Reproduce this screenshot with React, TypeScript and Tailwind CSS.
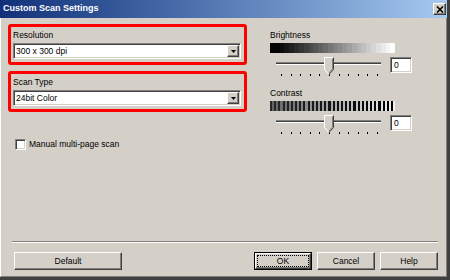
import React from "react";

const raised =
  "border border-t-white border-l-white border-b-[#404040] border-r-[#404040] shadow-[inset_-1px_-1px_0_#808080]";
const sunken =
  "border border-t-[#808080] border-l-[#808080] border-b-white border-r-white shadow-[inset_1px_1px_0_#404040,inset_-1px_-1px_0_#d4d0c8]";

const Combo = ({ value }: { value: string }) => (
  <div className={`flex h-[16px] w-[228px] bg-white p-[1px] ${sunken}`}>
    <div className="flex-1 pl-[1px] text-[8.5px] leading-[12px]">{value}</div>
    <div className={`flex w-[12px] items-center justify-center bg-[#d4d0c8] ${raised}`}>
      <svg width="5" height="3" viewBox="0 0 5 3">
        <path d="M0 0H5L2.5 3Z" fill="#000" />
      </svg>
    </div>
  </div>
);

const Field = ({ label, value }: { label: string; value: string }) => (
  <div className="h-[41px] w-[239px] rounded-[3px] border-[3px] border-[#ff0000] pt-[3px] pl-[2px]">
    <div className="h-[10px] text-[8.5px] leading-[10px]">{label}</div>
    <div className="mt-[3px]">
      <Combo value={value} />
    </div>
  </div>
);

const Thumb = () => (
  <svg width="10" height="18" viewBox="0 0 10 18" className="absolute top-0 left-[48px]">
    <path d="M0.5 0.5H9.5V12.5L5 17.5L0.5 12.5Z" fill="#d4d0c8" />
    <path d="M0.5 12.5V0.5H9.5" stroke="#fff" fill="none" />
    <path d="M0.5 12.5L5 17.5" stroke="#fff" fill="none" />
    <path d="M9.5 0.5V12.5L5 17.5" stroke="#404040" fill="none" />
    <path d="M8.5 1.5V12L5 16" stroke="#808080" fill="none" />
  </svg>
);

const Slider = () => (
  <div className="flex items-start">
    <div className="relative ml-[6px] h-[22px] w-[105px]">
      <div className="mt-[5px] h-[3px] border-t border-b border-t-[#808080] border-b-white bg-[#404040]" />
      <div className="mt-[9px] flex justify-between pl-[5px] pr-[3px]">
        {Array.from({ length: 11 }).map((_, i) => (
          <div key={i} className="h-[2px] w-[1px] bg-black" />
        ))}
      </div>
      <Thumb />
    </div>
    <div className={`ml-[9px] h-[16px] w-[22px] bg-white pl-[3px] text-[8.5px] leading-[14px] ${sunken}`}>
      0
    </div>
  </div>
);

const BrightnessBar = () => (
  <div className="flex h-[10px] w-[125px]">
    {Array.from({ length: 26 }).map((_, i) => {
      const v = i < 2 ? 0 : Math.round((255 * (i - 1)) / 24);
      return <div key={i} className="flex-1" style={{ background: `rgb(${v},${v},${v})` }} />;
    })}
  </div>
);

const ContrastBar = () => (
  <div className="flex h-[10px] w-[125px]">
    {Array.from({ length: 30 }).map((_, i) => {
      const t = i / 29;
      const light = Math.round(100 + t * 140);
      const dark = Math.round(40 - t * 40);
      return (
        <div key={i} className="flex flex-1">
          <div className="flex-1" style={{ background: `rgb(${dark},${dark},${dark})` }} />
          <div className="flex-1" style={{ background: `rgb(${light},${light},${light})` }} />
        </div>
      );
    })}
  </div>
);

const Button = ({ label, wide }: { label: string; wide?: boolean }) => (
  <div
    className={`flex h-[18px] items-center justify-center bg-[#d4d0c8] text-[8.5px] ${raised} ${
      wide ? "w-[108px]" : "w-[58px]"
    }`}
  >
    {label}
  </div>
);

export default function App() {
  return (
    <div className="flex h-[280px] w-[450px] flex-col border-r-[3px] border-b-[3px] border-r-[#404040] border-b-[#404040] bg-[#d4d0c8] font-['Liberation_Sans',Arial,sans-serif] text-black">
      <div className="flex h-[18px] shrink-0 items-center justify-between bg-linear-to-r from-[#12307a] to-[#a6caf0] pl-[3px] pr-[1px]">
        <span className="text-[9px] font-bold text-white">Custom Scan Settings</span>
        <div className={`flex h-[12px] w-[13px] items-center justify-center bg-[#d4d0c8] ${raised}`}>
          <svg width="8" height="7" viewBox="0 0 8 7">
            <path d="M1 0.5L7 6.5M7 0.5L1 6.5" stroke="#000" strokeWidth="1.6" />
          </svg>
        </div>
      </div>

      <div className="flex flex-1 flex-col border-l border-r border-b border-l-white border-r-[#808080] border-b-[#808080] pb-[6px]">
        <div className="mt-[6px] flex pl-[7px]">
          <div className="flex w-[239px] flex-col">
            <Field label="Resolution" value="300 x 300 dpi" />
            <div className="mt-[6px]">
              <Field label="Scan Type" value="24bit Color" />
            </div>
            <div className="mt-[27px] ml-[7px] flex items-center">
              <div className={`h-[11px] w-[11px] bg-white ${sunken}`} />
              <span className="ml-[3px] text-[8.5px] leading-[11px]">Manual multi-page scan</span>
            </div>
          </div>

          <div className="ml-[23px] flex flex-col pt-[6px]">
            <div className="h-[10px] text-[8.5px] leading-[10px]">Brightness</div>
            <div className="mt-[3px]">
              <BrightnessBar />
            </div>
            <div className="mt-[4px]">
              <Slider />
            </div>
            <div className="mt-[9px] h-[10px] text-[8.5px] leading-[10px]">Contrast</div>
            <div className="mt-[3px]">
              <ContrastBar />
            </div>
            <div className="mt-[4px]">
              <Slider />
            </div>
          </div>
        </div>

        <div className="mt-auto mb-[9px] ml-[11px] mr-[8px] h-[2px] border-t border-b border-t-[#808080] border-b-white" />

        <div className="flex items-center pl-[13px] pr-[8px]">
          <Button label="Default" wide />
          <div className="flex-1" />
          <div className="h-[18px] w-[58px] border border-black">
            <div className={`h-full w-full p-[1px] ${raised}`}>
              <div className="flex h-full items-center justify-center border border-dotted border-black text-[8.5px]">
                OK
              </div>
            </div>
          </div>
          <div className="ml-[5px]">
            <Button label="Cancel" />
          </div>
          <div className="ml-[5px]">
            <Button label="Help" />
          </div>
        </div>
      </div>
    </div>
  );
}
